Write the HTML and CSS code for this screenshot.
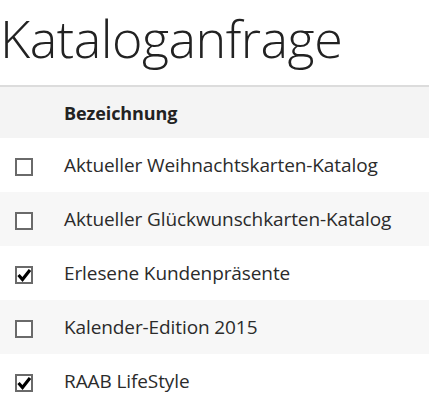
FILE: index.html
```html
<!DOCTYPE html>
<html lang="de">
<head>
<meta charset="utf-8">
<title>Kataloganfrage</title>
<link rel="stylesheet" href="styles.css">
</head>
<body>
<h1 class="title">Kataloganfrage</h1>
<table class="catalog">
  <thead>
    <tr class="head-row"><th class="col-check"></th><th class="col-name">Bezeichnung</th></tr>
  </thead>
  <tbody>
    <tr class="row"><td class="col-check"><span class="box"></span></td><td class="col-name">Aktueller Weihnachtskarten-Katalog</td></tr>
    <tr class="row alt"><td class="col-check"><span class="box"></span></td><td class="col-name">Aktueller Glückwunschkarten-Katalog</td></tr>
    <tr class="row"><td class="col-check"><span class="box checked"><svg viewBox="0 0 14 14" class="tick"><path d="M1.5 7 L5.5 11.5 L13 2" /></svg></span></td><td class="col-name">Erlesene Kundenpräsente</td></tr>
    <tr class="row alt"><td class="col-check"><span class="box"></span></td><td class="col-name">Kalender-Edition 2015</td></tr>
    <tr class="row"><td class="col-check"><span class="box checked"><svg viewBox="0 0 14 14" class="tick"><path d="M1.5 7 L5.5 11.5 L13 2" /></svg></span></td><td class="col-name">RAAB LifeStyle</td></tr>
  </tbody>
</table>
</body>
</html>
```
FILE: styles.css
```css
html, body { margin: 0; padding: 0; background: #fff; }
body { font-family: "Open Sans", "Liberation Sans", sans-serif; color: #2b2b2b; }
.title {
  margin: 0;
  padding: 7px 0 0 0;
  height: 78px;
  font-weight: 300;
  font-size: 52px;
  line-height: 62px;
  color: #222;
  letter-spacing: -0.5px;
}
.catalog { width: 100%; border-collapse: collapse; border-top: 2px solid #dcdcdc; }
.head-row { background: #f4f4f4; height: 52px; }
.head-row th { text-align: left; font-weight: 700; font-size: 18px; color: #222; padding-top: 1px; }
.row { height: 54px; }
.row.alt { background: #f7f7f7; }
.col-check { width: 64px; padding: 0 0 0 15px; box-sizing: border-box; }
.col-name { padding: 0; font-size: 19px; letter-spacing: -0.1px; }
.box {
  display: block;
  width: 18px; height: 18px;
  box-sizing: border-box;
  border: 2px solid #6a6a6a;
  background: #fff;
  margin-top: 4px;
  position: relative;
}
.tick { position: absolute; left: 0; top: 0; width: 14px; height: 14px; }
.tick path { fill: none; stroke: #000; stroke-width: 3.2; }
```
